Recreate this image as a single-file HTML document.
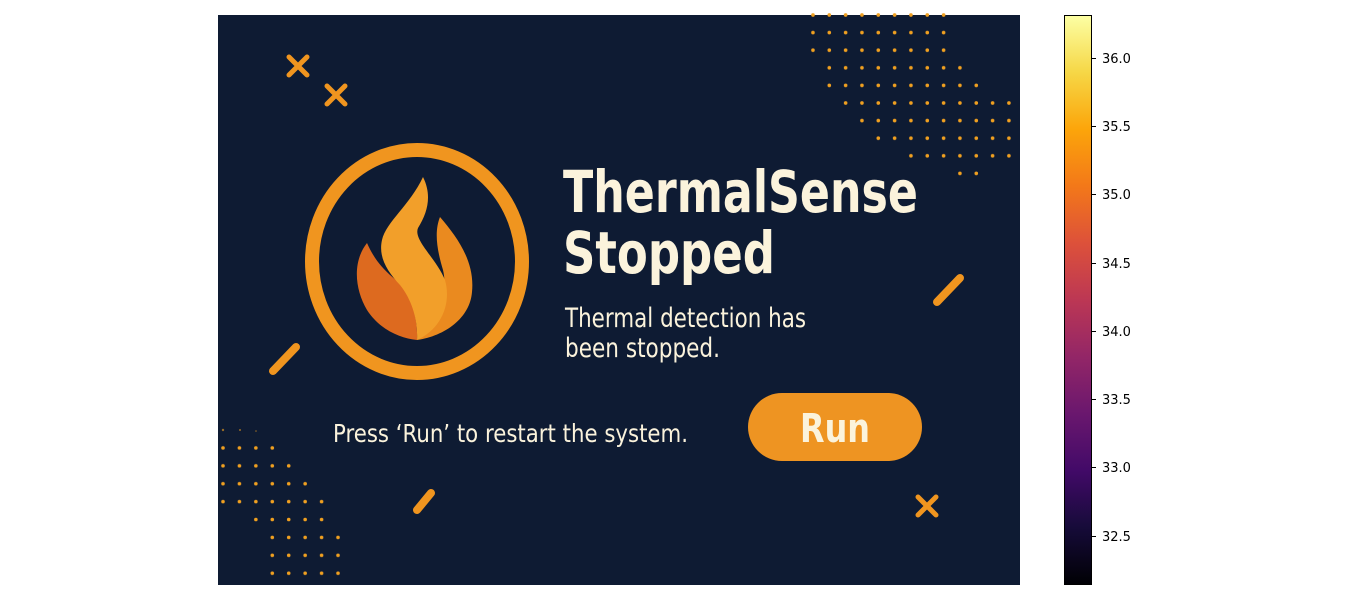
<!DOCTYPE html>
<html><head><meta charset="utf-8"><style>
html,body{margin:0;padding:0;background:#fff;}
body{width:1346px;height:600px;overflow:hidden;position:relative;}
</style></head><body>
<svg width="1346" height="600" viewBox="0 0 1346 600" xmlns="http://www.w3.org/2000/svg" style="position:absolute;left:0;top:0">
<defs>
<pattern id="pt" patternUnits="userSpaceOnUse" x="804.8" y="6.2" width="16.33" height="17.6"><circle cx="8.165" cy="8.8" r="1.8" fill="#f0a020"/></pattern>
<pattern id="pb" patternUnits="userSpaceOnUse" x="214.8" y="421.05" width="16.43" height="17.9"><circle cx="8.2" cy="8.95" r="1.8" fill="#f0a020"/></pattern>
<linearGradient id="inf" x1="0" y1="1" x2="0" y2="0">
<stop offset="0" stop-color="#000004"/><stop offset="0.1" stop-color="#160b39"/><stop offset="0.2" stop-color="#420a68"/><stop offset="0.3" stop-color="#6a176e"/><stop offset="0.4" stop-color="#932667"/><stop offset="0.5" stop-color="#bc3754"/><stop offset="0.6" stop-color="#dd513a"/><stop offset="0.7" stop-color="#f37819"/><stop offset="0.8" stop-color="#fca50a"/><stop offset="0.9" stop-color="#f6d746"/><stop offset="1" stop-color="#fcffa4"/>
</linearGradient>
</defs>
<rect x="218" y="15" width="802" height="570" fill="#0e1b33"/>
<g fill="url(#pt)">
<rect x="804.8" y="11" width="147" height="8"/>
<rect x="804.8" y="28.6" width="147" height="8"/>
<rect x="804.8" y="46.2" width="147" height="8"/>
<rect x="821.1" y="63.8" width="147" height="8"/>
<rect x="821.1" y="81.4" width="163.3" height="8"/>
<rect x="837.5" y="99" width="179.6" height="8"/>
<rect x="853.8" y="116.6" width="163.3" height="8"/>
<rect x="870.1" y="134.2" width="147" height="8"/>
<rect x="902.8" y="151.8" width="114.3" height="8"/>
<rect x="951.8" y="169.4" width="32.7" height="8"/>
</g>
<g fill="url(#pb)">
<rect x="214.8" y="444" width="65.7" height="8"/>
<rect x="214.8" y="462" width="82.2" height="8"/>
<rect x="214.8" y="479" width="98.6" height="8"/>
<rect x="214.8" y="497" width="115" height="8"/>
<rect x="247.7" y="515" width="82.2" height="8"/>
<rect x="264.1" y="533" width="82.2" height="8"/>
<rect x="264.1" y="551" width="82.2" height="8"/>
<rect x="264.1" y="569" width="82.2" height="8"/>
</g>
<g fill="#f0a020" opacity="0.6"><circle cx="223" cy="430" r="1.2"/><circle cx="240" cy="430" r="1"/><circle cx="256" cy="431" r="0.8"/></g>
<g stroke="#f0951f" stroke-linecap="round" fill="none">
<path d="M289,57 L307,75 M307,57 L289,75" stroke-width="5"/>
<path d="M327,86 L345,104 M345,86 L327,104" stroke-width="5"/>
<path d="M918,497 L936,515 M936,497 L918,515" stroke-width="5"/>
<path d="M937,302 L960,278" stroke-width="8"/>
<path d="M273,371 L296,347" stroke-width="8"/>
<path d="M417,510 L431,493" stroke-width="8"/>
</g>
<ellipse cx="417" cy="261.5" rx="105" ry="111.5" fill="none" stroke="#f0951f" stroke-width="14"/>
<path d="M440,217 C434,232 437,250 443,270 C448,290 440,325 417,340 C445,336 470,318 472,292 C475,262 458,238 440,217 Z" fill="#ea8a1f"/>
<path d="M367,243 C352,262 355,290 367,310 C380,330 400,338 417,340 C418,320 412,300 405,288 C392,276 378,268 367,243 Z" fill="#dd6a1f"/>
<path d="M423,177 C432,195 428,212 418,228 C413,240 436,258 445,280 C452,305 440,330 417,340 C418,320 412,300 400,285 C388,272 378,258 382,240 C386,222 410,205 423,177 Z" fill="#f29f2a"/>
<g font-family="'DejaVu Sans','Liberation Sans',sans-serif" fill="#fbf3dc">
<text x="563" y="212" font-size="58" font-weight="bold" textLength="355" lengthAdjust="spacingAndGlyphs">ThermalSense</text>
<text x="563" y="273" font-size="58" font-weight="bold" textLength="212" lengthAdjust="spacingAndGlyphs">Stopped</text>
<text x="565" y="327" font-size="27" textLength="241" lengthAdjust="spacingAndGlyphs">Thermal detection has</text>
<text x="565" y="357" font-size="27" textLength="155" lengthAdjust="spacingAndGlyphs">been stopped.</text>
<text x="333" y="442" font-size="25" textLength="355" lengthAdjust="spacingAndGlyphs">Press ‘Run’ to restart the system.</text>
</g>
<rect x="748" y="393" width="174" height="68" rx="34" fill="#ee9422"/>
<text x="800" y="442" font-family="'DejaVu Sans','Liberation Sans',sans-serif" font-size="40" font-weight="bold" fill="#fbf3dc" textLength="70" lengthAdjust="spacingAndGlyphs">Run</text>
<rect x="1064.5" y="15.5" width="27" height="569" fill="url(#inf)" stroke="#000" stroke-width="1"/>
<g stroke="#000" stroke-width="1">
<path d="M1092,58.5h4M1092,126.5h4M1092,194.5h4M1092,263.5h4M1092,331.5h4M1092,399.5h4M1092,467.5h4M1092,536.5h4"/>
</g>
<g font-family="'DejaVu Sans',sans-serif" font-size="13" fill="#000">
<text x="1102" y="63">36.0</text>
<text x="1102" y="131">35.5</text>
<text x="1102" y="199">35.0</text>
<text x="1102" y="268">34.5</text>
<text x="1102" y="336">34.0</text>
<text x="1102" y="404">33.5</text>
<text x="1102" y="472">33.0</text>
<text x="1102" y="541">32.5</text>
</g>
</svg>
</body></html>
